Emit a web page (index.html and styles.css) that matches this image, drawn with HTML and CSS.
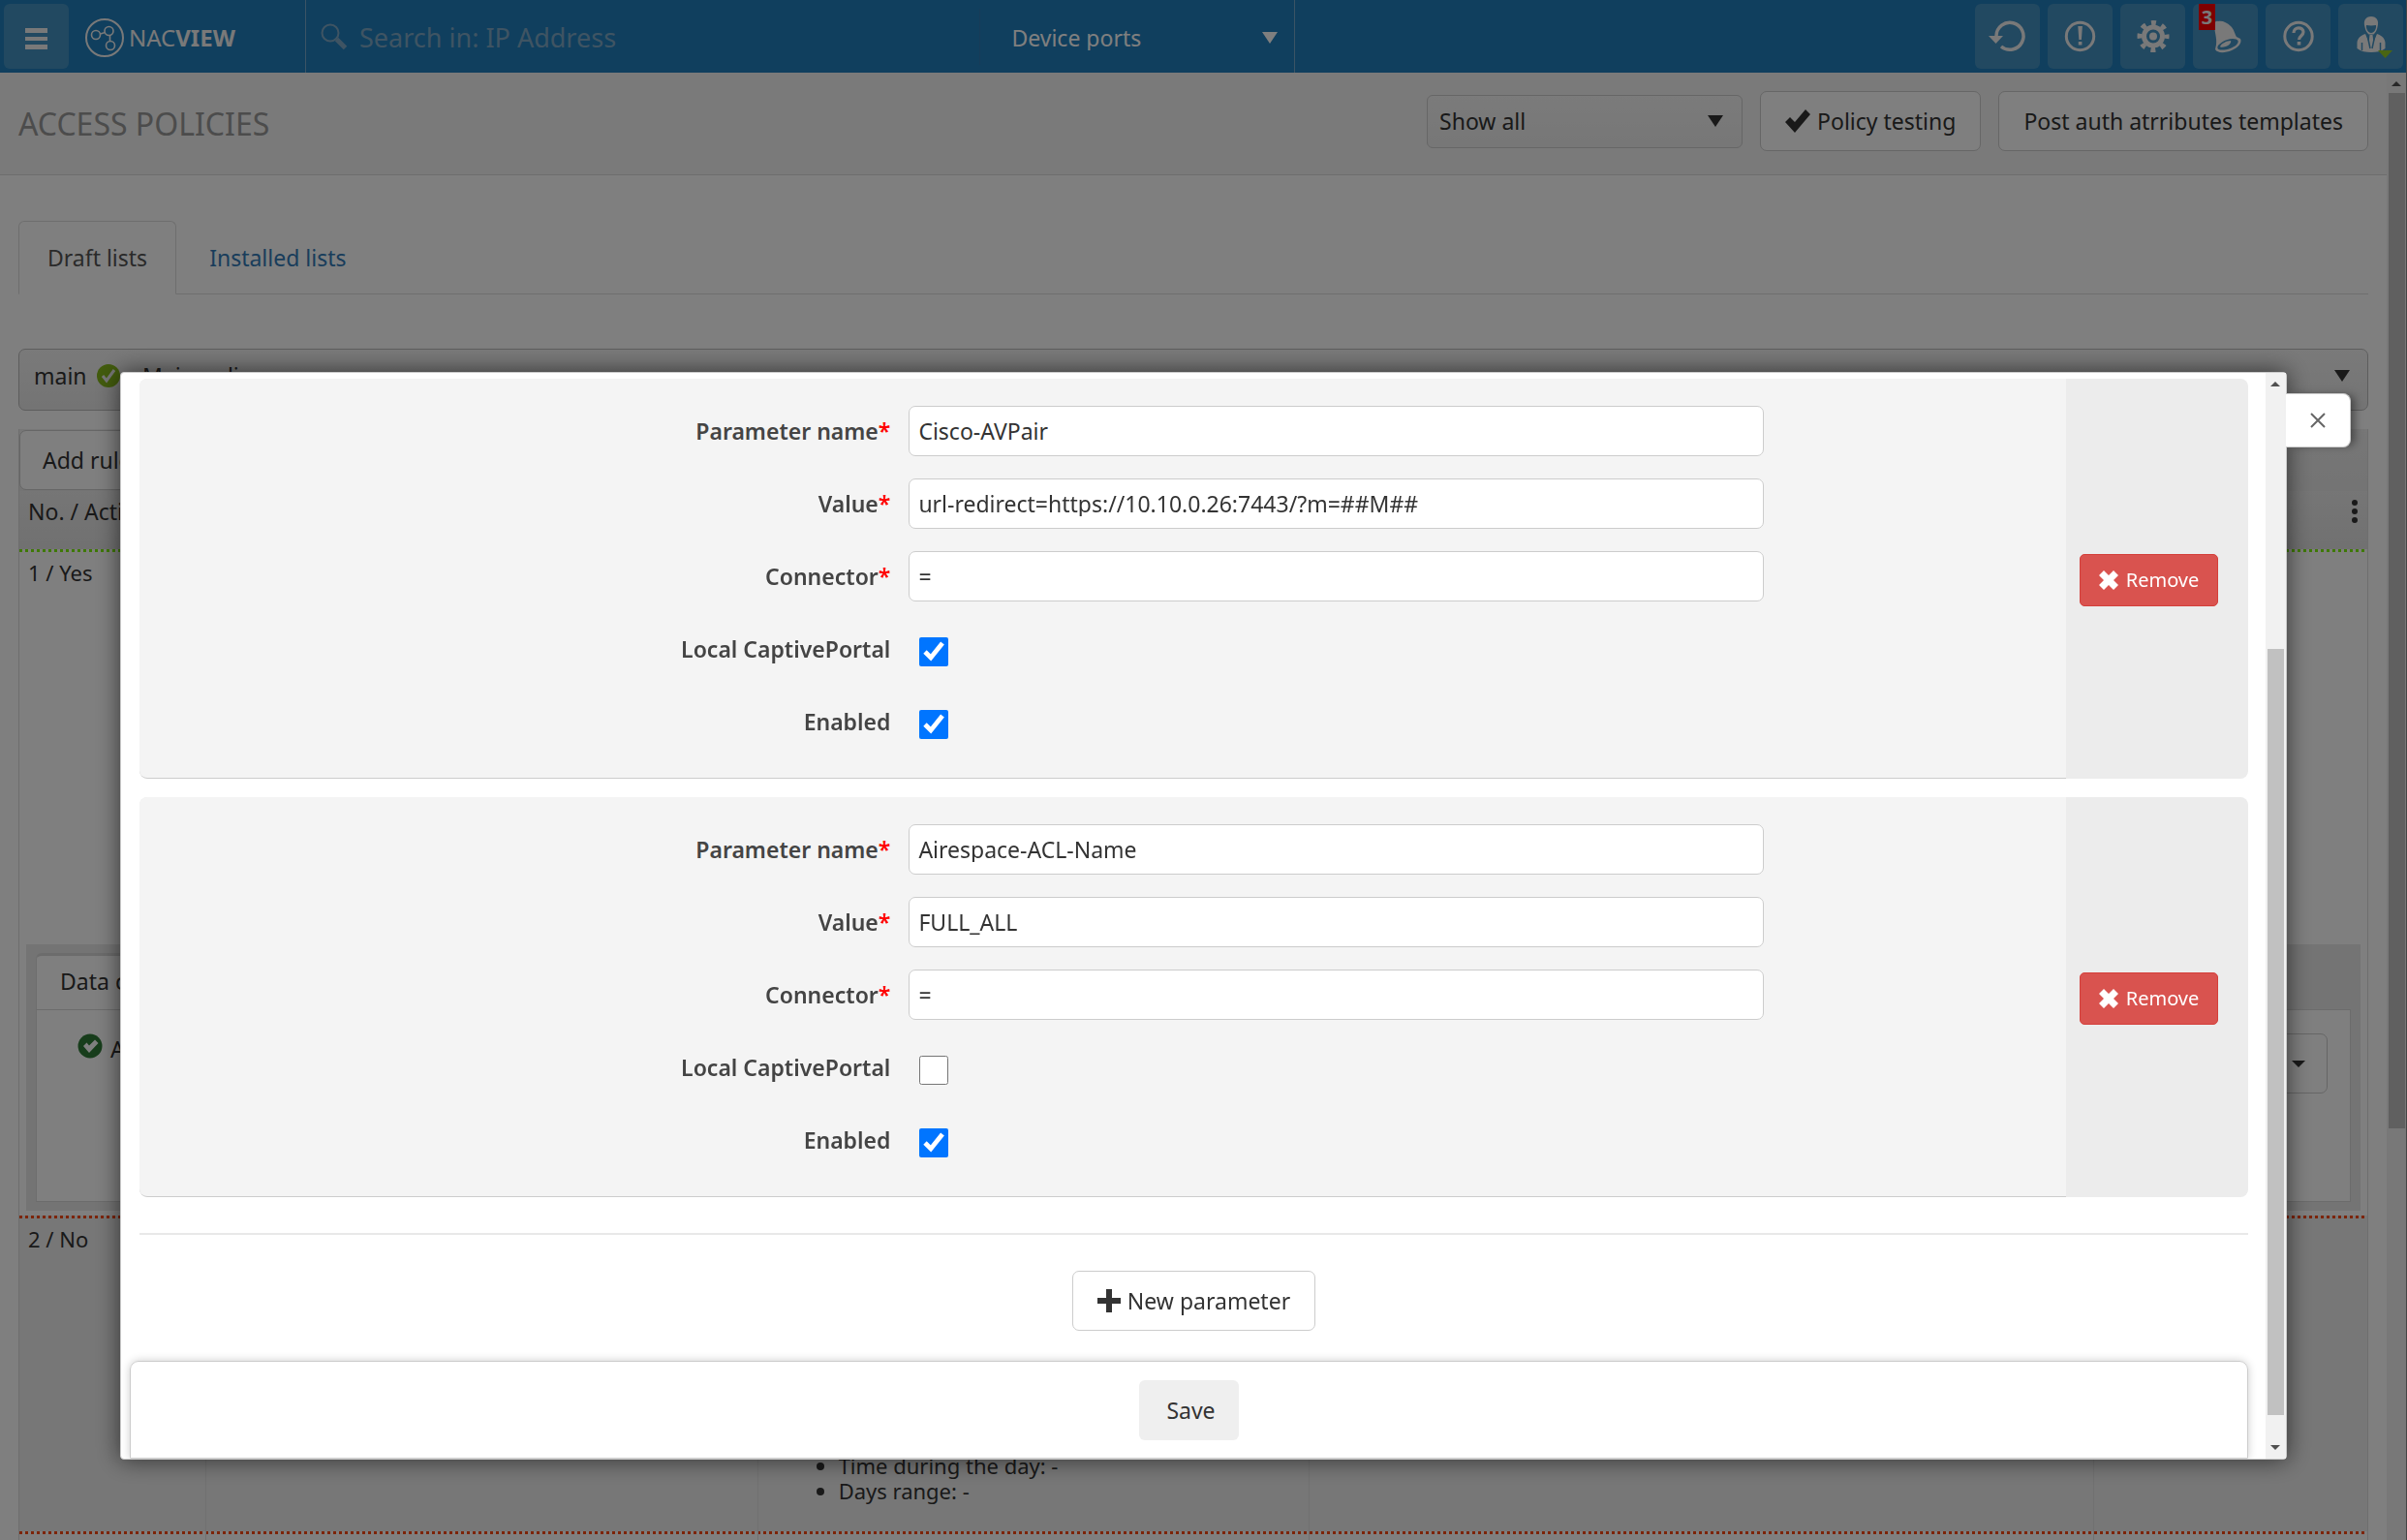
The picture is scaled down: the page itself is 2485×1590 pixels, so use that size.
FILE: index.html
```html
<!DOCTYPE html>
<html lang="en">
<head>
<meta charset="utf-8">
<title>NACVIEW - Access policies</title>
<link rel="stylesheet" href="styles.css">
</head>
<body>
<div class="app">
  <header class="topbar">
    <div class="brand">
      <button class="tile" type="button" aria-label="Menu">
        <svg width="24" height="24" viewBox="0 0 24 24"><path d="M0 1h23v5H0zM0 10h23v4H0zM0 18h23v5H0z"/></svg>
      </button>
      <a class="logo" href="#">
        <svg width="42" height="42" viewBox="0 0 42 42" fill="none" stroke="currentColor" stroke-width="2"><circle cx="21" cy="21" r="19"/><g stroke-width="1.6"><circle cx="12" cy="18" r="4.5"/><circle cx="25.500" cy="14" r="4.500"/><circle cx="27" cy="29" r="4.500"/><path d="M16.500 17l5-1.500M26.500 18.500v6"/></g></svg>
        <span>NAC<b>VIEW</b></span>
      </a>
    </div>
    <div class="search">
      <svg class="search-icon" width="28" height="28" viewBox="0 0 28 28" fill="none" stroke="currentColor"><circle cx="10" cy="10" r="8.500" stroke-width="2"/><path d="M16.500 16.500l9 9" stroke-width="5"/></svg>
      <input class="search-input" type="text" placeholder="Search in: IP Address" aria-label="Search">
      <div class="pick scope">
        <select aria-label="Search scope"><option>Device ports</option></select>
        <svg width="16" height="12" viewBox="0 0 16 12"><path d="M0 0h16L8 12z"/></svg>
      </div>
    </div>
    <nav class="tools">
      <button class="tile" type="button" aria-label="Refresh">
        <svg width="40" height="40" viewBox="0 0 40 40"><path d="M8 20a14 14 0 1 1 5 11" fill="none" stroke="currentColor" stroke-width="3.500"/><path d="M0 20h15l-7.500 8z"/></svg>
      </button>
      <button class="tile" type="button" aria-label="Alerts">
        <svg width="40" height="40" viewBox="0 0 40 40"><circle cx="19.500" cy="20.500" r="14.200" fill="none" stroke="currentColor" stroke-width="3"/><path d="M17.300 10h4.600l-1 14h-2.600zM17.800 26h3.600v3.500h-3.600z"/></svg>
      </button>
      <button class="tile" type="button" aria-label="Settings">
        <svg width="40" height="40" viewBox="0 0 40 40" fill="none" stroke="currentColor"><circle cx="20" cy="20.500" r="9.500" stroke-width="5"/><circle cx="20" cy="20.500" r="14" stroke-width="5" stroke-dasharray="5 5.996" stroke-dashoffset="2.500"/><circle cx="20" cy="20.500" r="4" fill="currentColor" stroke="none"/></svg>
      </button>
      <button class="tile" type="button" aria-label="Notifications">
        <svg width="40" height="40" viewBox="0 0 40 40"><path d="M12 5c4-1 9 1 13 5 4 4 4 8 6 11l4 2c2 4-2 9-9 12-7 3-15 3-17-1l1-5c1-7-2-14-2-20 0-3 2-5 4-4z"/><path d="M32.500 25c1 3-3 6-8 8-6 2-12 2-13 0-1-3 4-7 10-9 5-2 10-1 11 1z" fill="#4492c2"/><path d="M25 25c1 2-2 5-5 6-3 1-6 1-6 0 1-3 7-6 11-6z"/></svg>
        <span class="badge">3</span>
      </button>
      <button class="tile" type="button" aria-label="Help">
        <svg width="40" height="40" viewBox="0 0 40 40" fill="none" stroke="currentColor"><circle cx="20" cy="20.500" r="14.200" stroke-width="3"/><path d="M15 17c0-7 10-6.500 10-1 0 4-4.500 4-4.500 8" stroke-width="3.200"/><path d="M18.700 26h3.600v3.500h-3.600z" fill="currentColor" stroke="none"/></svg>
      </button>
      <button class="tile" type="button" aria-label="Account">
        <svg width="40" height="44" viewBox="0 0 40 44" overflow="visible"><path d="M13.500 13c-2-7 1-11 6.500-11s8.500 4 6.500 11c-.5 3-2 6-4 7.500h-5c-2-1.500-3.500-4.500-4-7.500z"/><path d="M15 11c3 .5 7 .5 10 0 .5 4-2 8-5 8s-5.500-4-5-8z" fill="#4492c2"/><path d="M14 20l6 14 6-14c6 2 8 5 8.500 9v6c-4 3-9 4-14.500 4s-10.500-1-14.500-4v-6c.5-4 2.500-7 8.500-9z"/><path d="M18.500 21h3l1.500 13-3 3-3-3z"/><path d="M16 21l3 14M24 21l-3 14M10.500 29v8M29.500 29v8" fill="none" stroke="#4492c2" stroke-width="1.500"/><path d="M27 37h15l-7.500 8z" fill="#95cb25"/></svg>
      </button>
    </nav>
  </header>

  <div class="page">
    <main class="content">
      <div class="page-head">
        <h1>ACCESS POLICIES</h1>
        <div class="pick filter">
          <select aria-label="Filter"><option>Show all</option></select>
          <svg width="16" height="12" viewBox="0 0 16 12"><path d="M0 0h16L8 12z"/></svg>
        </div>
        <button class="btn" type="button"><svg width="26" height="24" viewBox="0 0 26 24"><path d="M0 13l5-5 5 5L21 0l5 5-16 19z"/></svg>Policy testing</button>
        <button class="btn" type="button">Post auth atrributes templates</button>
      </div>

      <nav class="tabs">
        <a class="tab active" href="#">Draft lists</a>
        <a class="tab" href="#">Installed lists</a>
      </nav>

      <button class="list-select" type="button">
        <span>main</span>
        <svg width="24" height="24" viewBox="0 0 24 24"><circle cx="12" cy="12" r="12" fill="#86b81c"/><path d="M6 12l4 5 8-11" fill="none" stroke="#eee" stroke-width="3"/></svg>
        <span class="grow">- Main policy</span>
        <svg width="16" height="12" viewBox="0 0 16 12"><path d="M0 0h16L8 12z"/></svg>
      </button>

      <div class="rules">
        <div class="rules-bar"><button class="btn" type="button">Add rule</button></div>
        <table>
          <colgroup><col class="c1"><col class="c2"><col class="c3"><col class="c4"><col></colgroup>
          <thead>
            <tr><th>No. / Active</th><th></th><th></th><th></th><th class="more">
              <svg width="8" height="26" viewBox="0 0 8 26"><circle cx="4" cy="4" r="3"/><circle cx="4" cy="13" r="3"/><circle cx="4" cy="22" r="3"/></svg></th></tr>
          </thead>
          <tbody>
            <tr class="on"><td>1 / Yes</td><td></td><td></td><td></td><td></td></tr>
            <tr class="detail"><td colspan="5">
              <div class="box">
                <div class="box-tab">Data conditions</div>
                <div class="box-body">
                  <svg width="26" height="26" viewBox="0 0 26 26"><circle cx="13" cy="13" r="12.500" fill="#2f7a37"/><path d="M6 13l3.500-3.500 2.500 3 6-6 3.500 3.500-9.500 10z" fill="#fff"/></svg>
                  <span class="grow">All</span>
                  <button class="btn" type="button" aria-label="Actions"><svg width="14" height="7" viewBox="0 0 14 7"><path d="M0 0h14L7 7z"/></svg></button>
                </div>
              </div>
            </td></tr>
            <tr class="off lined"><td>2 / No</td><td></td><td class="low"><ul><li>Time during the day: -</li><li>Days range: -</li></ul></td><td></td><td></td></tr>
            <tr class="off"><td></td><td></td><td></td><td></td><td></td></tr>
          </tbody>
        </table>
      </div>
    </main>
    <div class="scrollbar page-scroll">
      <svg width="10" height="5" viewBox="0 0 10 5"><path d="M0 5h10L5 0z"/></svg>
      <div class="thumb"></div>
    </div>
  </div>
</div>

<div class="overlay">
  <section class="modal" role="dialog" aria-label="Post auth attributes">
    <form class="modal-body">
      <div class="card">
        <div class="fields">
          <label for="n1">Parameter name<i>*</i></label><input id="n1" type="text" value="Cisco-AVPair">
          <label for="v1">Value<i>*</i></label><input id="v1" type="text" value="url-redirect=https://10.10.0.26:7443/?m=##M##">
          <label for="c1">Connector<i>*</i></label><input id="c1" type="text" value="=">
          <label for="l1">Local CaptivePortal</label><input id="l1" type="checkbox" checked>
          <label for="e1">Enabled</label><input id="e1" type="checkbox" checked>
        </div>
        <div class="side"><button class="remove" type="button"><svg width="20" height="20" viewBox="0 0 20 20"><path d="M0 5l5-5 5 5 5-5 5 5-5 5 5 5-5 5-5-5-5 5-5-5 5-5z"/></svg>Remove</button></div>
      </div>
      <div class="card">
        <div class="fields">
          <label for="n2">Parameter name<i>*</i></label><input id="n2" type="text" value="Airespace-ACL-Name">
          <label for="v2">Value<i>*</i></label><input id="v2" type="text" value="FULL_ALL">
          <label for="c2">Connector<i>*</i></label><input id="c2" type="text" value="=">
          <label for="l2">Local CaptivePortal</label><input id="l2" type="checkbox">
          <label for="e2">Enabled</label><input id="e2" type="checkbox" checked>
        </div>
        <div class="side"><button class="remove" type="button"><svg width="20" height="20" viewBox="0 0 20 20"><path d="M0 5l5-5 5 5 5-5 5 5-5 5 5 5-5 5-5-5-5 5-5-5 5-5z"/></svg>Remove</button></div>
      </div>
      <hr>
      <div class="add"><button class="btn" type="button"><svg width="24" height="24" viewBox="0 0 24 24"><path d="M9 0h6v9h9v6h-9v9H9v-9H0V9h9z"/></svg>New parameter</button></div>
      <div class="modal-foot"><button class="save" type="submit">Save</button></div>
    </form>
    <div class="scrollbar modal-scroll">
      <svg width="10" height="5" viewBox="0 0 10 5"><path d="M0 5h10L5 0z"/></svg>
      <div class="thumb"></div>
      <svg width="10" height="5" viewBox="0 0 10 5"><path d="M0 0h10L5 5z"/></svg>
    </div>
    <button class="close" type="button" aria-label="Close"><svg width="16" height="16" viewBox="0 0 16 16"><path d="M1 1l14 14M15 1L1 15" fill="none" stroke="#666" stroke-width="2"/></svg></button>
  </section>
</div>
</body>
</html>
```
FILE: styles.css
```css
* { box-sizing: border-box; }
body {
  margin: 0;
  font: 23px/26px "Noto Sans", "Open Sans", sans-serif;
  color: #333;
}
button, input, select { font: inherit; color: inherit; margin: 0; }
button { cursor: pointer; }
svg { display: block; fill: currentColor; flex: none; }
svg[fill="none"] { fill: none; }
a { text-decoration: none; }
.grow { flex: 1; }

.app {
  height: 100vh;
  overflow: hidden;
  display: flex;
  flex-direction: column;
  background: #fff;
  border-right: 1px solid #888;
}

/* top bar */
.topbar {
  display: flex;
  align-items: stretch;
  height: 75px;
  flex: none;
  background: #207ebc;
  color: #f2f2f2;
}
.brand {
  display: flex;
  align-items: flex-start;
  width: 316px;
  padding: 4px;
  border-right: 1px solid #76a9ca;
}
.tile {
  position: relative;
  display: flex;
  align-items: center;
  justify-content: center;
  width: 67px;
  height: 67px;
  padding: 0 0 2px;
  border: 0;
  border-radius: 6px;
  background: #4492c2;
}
.brand .tile { padding: 5px 0 0; }
.logo {
  display: flex;
  align-items: center;
  gap: 4px;
  height: 70px;
  padding-left: 16px;
  color: inherit;
  font-size: 24px;
}
.search {
  display: flex;
  align-items: center;
  flex: 0 0 calc(41% + 3px);
  padding-left: 15px;
  border-right: 1px solid #76a9ca;
  color: #fff;
}
.search-icon { color: #7ea9c6; }
.search-input {
  flex: 1;
  min-width: 0;
  border: 0;
  padding: 2px 12px 0;
  background: none;
  font-size: 27px;
}
.search-input::placeholder { color: #7ea9c6; opacity: 1; }
.pick { display: grid; align-items: center; }
.pick select {
  grid-area: 1 / 1;
  width: 100%;
  height: 100%;
  appearance: none;
  border: 0;
  background: none;
}
.pick svg { grid-area: 1 / 1; justify-self: end; pointer-events: none; }
.scope {
  width: 325px;
  height: 58px;
  padding: 3px 17px 0 32px;
  border-left: 1px solid #2f78b0;
}
.tools { display: flex; gap: 8px; margin-left: auto; padding: 4px 3px; }
.badge {
  position: absolute;
  left: 6px;
  top: 0;
  width: 17px;
  background: #f00;
  font: bold 20px/27px "Noto Sans", sans-serif;
  text-align: center;
}

/* page */
.page { display: flex; flex: 1; min-height: 0; }
.content { flex: 1; min-width: 0; overflow: hidden; }
.page-head {
  display: flex;
  align-items: center;
  gap: 18px;
  padding: 19px 19px 24px;
  background: #f4f4f4;
  border-bottom: 1px solid #ddd;
}
h1 {
  flex: 1;
  margin: 0;
  padding-top: 5px;
  font-size: 32px;
  line-height: 40px;
  font-weight: 400;
  color: #999;
}
.filter {
  width: 326px;
  height: 55px;
  padding: 0 19px 0 12px;
  border: 1px solid #ccc;
  border-radius: 6px;
  background: linear-gradient(#f6f6f6, #eee);
}
.btn {
  display: inline-flex;
  align-items: center;
  gap: 7px;
  height: 62px;
  padding: 0 25px;
  border: 1px solid #ccc;
  border-radius: 7px;
  background: #fff;
  white-space: nowrap;
}
.tabs {
  display: flex;
  gap: 4px;
  margin: 47px 19px 56px;
  border-bottom: 1px solid #ddd;
}
.tab {
  height: 76px;
  padding: 0 29px;
  border: 1px solid transparent;
  border-radius: 6px 6px 0 0;
  margin-bottom: -1px;
  line-height: 74px;
  color: #337ab7;
}
.tab.active { border-color: #ddd #ddd #fff; background: #fff; color: #555; }
.list-select {
  display: flex;
  align-items: center;
  gap: 10px;
  width: calc(100% - 38px);
  height: 64px;
  margin: 0 19px 19px;
  padding: 0 18px 8px 15px;
  border: 1px solid #bbb;
  border-radius: 7px;
  background: linear-gradient(#f4f4f4, #e8e8e8);
  text-align: left;
}
.rules { margin: 0 19px; border: solid #ddd; border-width: 0 1px; }
.rules-bar { height: 64px; padding-top: 1px; background: linear-gradient(#eee, #e8e8e8); }
.rules-bar .btn { padding: 0 23px; }
table { width: 100%; border-collapse: separate; border-spacing: 0; table-layout: fixed; }
.c1 { width: 192px; }
.c2, .c3 { width: 23.5%; }
.c4 { width: 33.4%; }
th, td { padding: 11px 9px 0; text-align: left; vertical-align: top; font-weight: 400; }
td { font-size: 22px; }
th { height: 60px; padding-top: 8px; background: linear-gradient(#ececec, #e2e2e2); }
.more svg { margin-left: auto; }
tr.on, tr.off { background-repeat: no-repeat; background-size: 100% 3px; }
tr.on { height: 408px; background-image: repeating-linear-gradient(90deg, #7ef00c 0 3px, transparent 3px 6px); }
tr.off { height: 326px; background-image: repeating-linear-gradient(90deg, #f84810 0 3px, transparent 3px 6px); }
tr.lined { background-color: #eee; }
tr.off td + td { border-left: 1px solid #e2e2e2; }
.detail td { padding: 0 7px 5px; font-size: 23px; }
.box { height: 275px; padding: 9px 10px; background: #e8e8e8; }
.box-tab {
  width: 240px;
  height: 58px;
  padding: 13px 24px;
  border: 1px solid #ddd;
  border-top: 3px solid #d8d8d8;
  border-bottom: 0;
  border-radius: 6px 6px 0 0;
  background: #fff;
}
.box-body {
  display: flex;
  align-items: flex-start;
  gap: 8px;
  height: 199px;
  padding: 24px 23px 0 42px;
  border: 1px solid #d8d8d8;
  border-left-color: #ddd;
  background: #fff;
}
.box-body .btn { padding: 0 22px; }
.box-body span { padding-top: 3px; }
td.low { vertical-align: bottom; padding-bottom: 29px; }
td ul { margin: 0; padding-left: 74px; }

/* drawn scroll bars */
.scrollbar { display: flex; flex-direction: column; align-items: center; flex: none; width: 20px; background: #f1f1f1; color: #505050; }
.thumb { width: 17px; background: #c1c1c1; }
.page-scroll { padding-top: 9px; }
.page-scroll .thumb { height: 71%; margin-top: 7px; }

/* dialog */
.overlay {
  position: fixed;
  inset: 0;
  padding: 384px 5% 0;
  background: rgba(0, 0, 0, .5);
}
.modal {
  position: relative;
  display: flex;
  border: 1px solid #ccc;
  border-radius: 4px;
  background: #fff;
  box-shadow: 0 0 24px rgba(0, 0, 0, .6);
}
.modal-body { flex: 1; min-width: 0; padding: 6px 18px 0 19px; }
.card {
  display: flex;
  margin-bottom: 19px;
  border-radius: 8px;
  background: #ececec;
  overflow: hidden;
}
.fields {
  flex: 1;
  display: grid;
  grid-template-columns: 9fr 10fr;
  grid-auto-rows: 52px;
  gap: 23px 0;
  padding: 28px 312px 32px 0;
  background: #f4f4f4;
  border-bottom: 1px solid #ccc;
  border-bottom-left-radius: 8px;
}
.fields label {
  padding-right: 19px;
  text-align: right;
  line-height: 53px;
  font-weight: 600;
  color: #444;
}
.fields i { font-style: normal; color: #f00; }
.fields input[type="text"] {
  width: 100%;
  padding: 0 9px;
  border: 1px solid #ccc;
  border-radius: 7px;
  background: #fff;
}
.fields input[type="checkbox"] { width: 30px; height: 30px; margin: 14px 0 0 11px; }
.side { display: flex; align-items: center; width: 188px; padding: 3px 0 0 14px; }
.remove {
  display: flex;
  align-items: center;
  gap: 8px;
  height: 54px;
  padding: 0 19px;
  border: 1px solid #d43f3a;
  border-radius: 5px;
  background: #d9534f;
  color: #fff;
  font-size: 20px;
}
hr { height: 2px; margin: 37px 0; border: 0; background: #e8e8e8; }
.add { display: flex; justify-content: center; }
.modal-foot {
  display: flex;
  justify-content: center;
  align-items: flex-start;
  height: 101px;
  margin: 31px 0 0 -10px;
  padding-top: 19px;
  border: 1px solid #ccc;
  border-radius: 9px 9px 0 0;
  box-shadow: 0 0 10px rgba(0, 0, 0, .2);
  clip-path: inset(-12px -12px 0 -12px);
}
.save { height: 62px; padding: 0 24px 0 28px; border: 0; border-radius: 6px; background: #efefef; }
.modal-scroll { width: 21px; padding: 9px 0; }
.modal-scroll .thumb { flex: 0 0 791px; margin: 271px 0 auto; }
.close {
  position: absolute;
  left: 100%;
  top: 21px;
  display: flex;
  align-items: center;
  width: 67px;
  height: 56px;
  padding: 0 0 0 25px;
  border: 1px solid #ccc;
  border-left: 0;
  border-radius: 0 8px 8px 0;
  background: #fff;
  box-shadow: 6px 0 8px -2px rgba(0, 0, 0, .4);
}
```
